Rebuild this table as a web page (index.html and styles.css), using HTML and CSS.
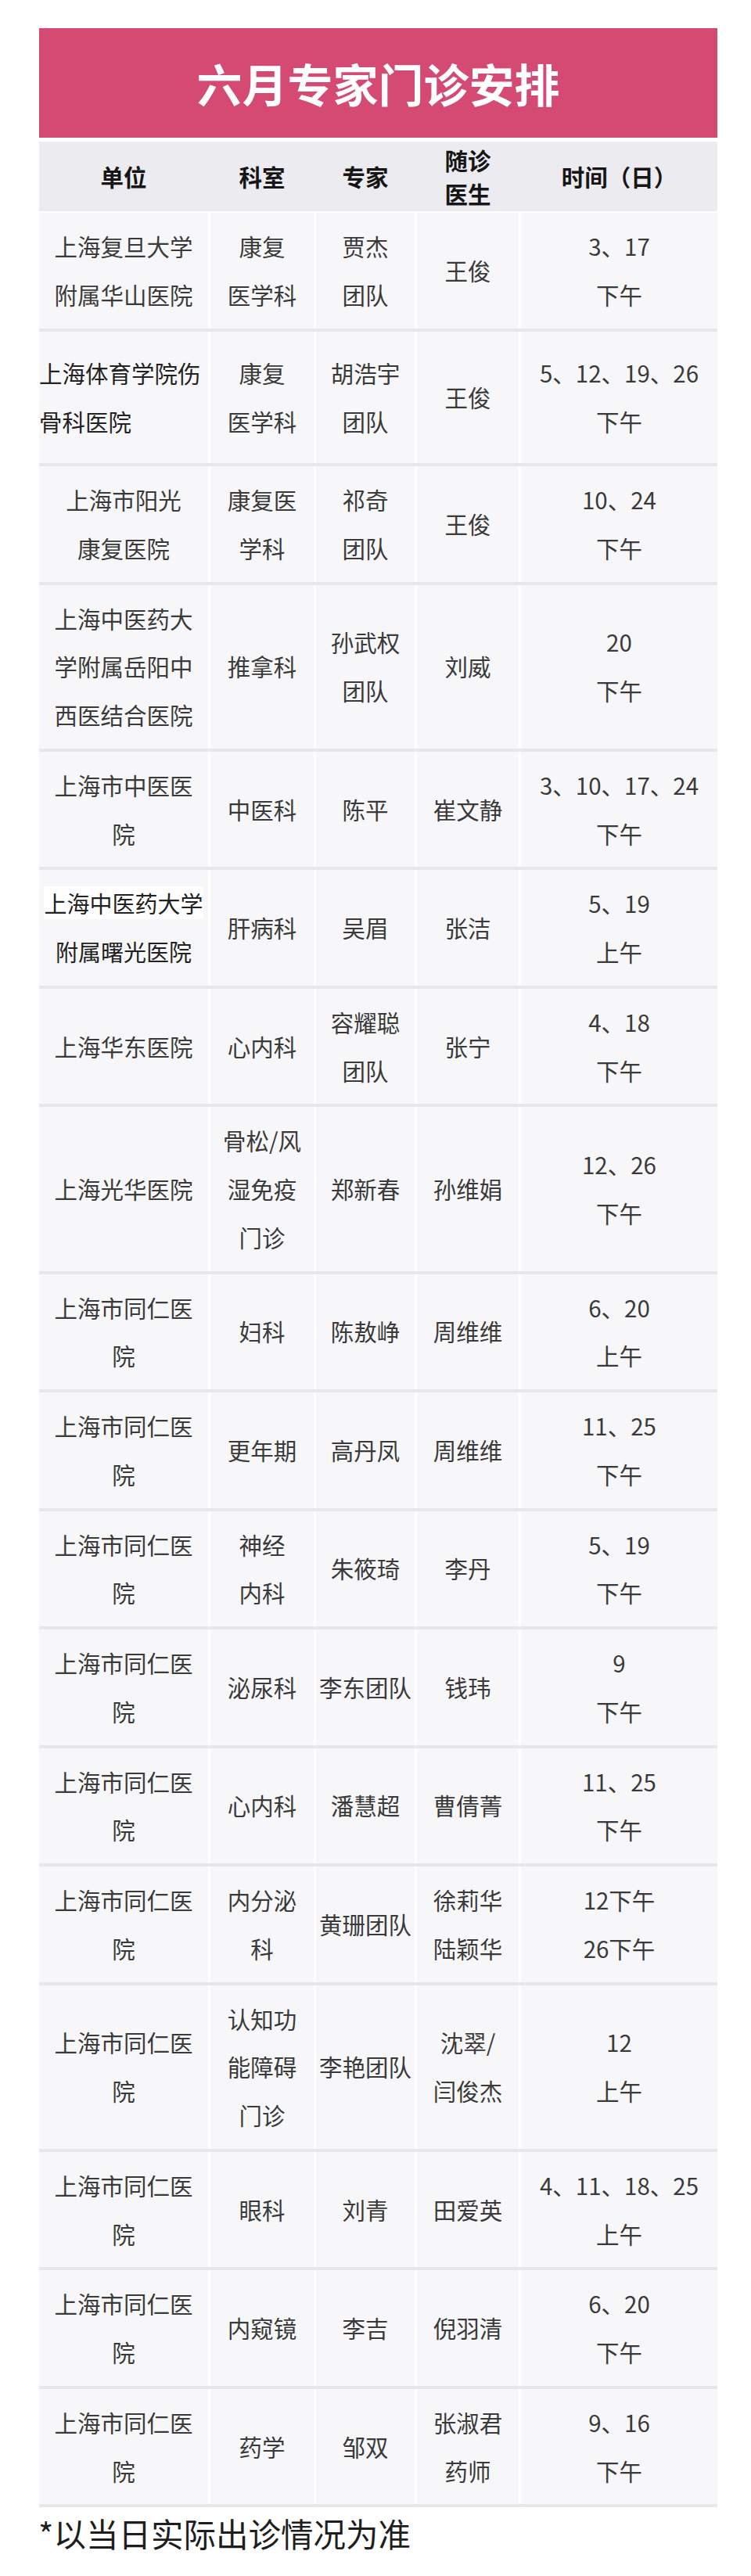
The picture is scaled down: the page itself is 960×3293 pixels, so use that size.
FILE: index.html
```html
<!DOCTYPE html>
<html lang="zh-CN">
<head>
<meta charset="utf-8">
<title>六月专家门诊安排</title>
<link rel="stylesheet" href="styles.css">
</head>
<body>
<div class="page">
  <div class="banner"><h1 class="title">六月专家门诊安排</h1></div>
  <div class="table">
    <div class="row head">
      <div class="cell">单位</div>
      <div class="cell">科室</div>
      <div class="cell">专家</div>
      <div class="cell">随诊<br>医生</div>
      <div class="cell">时间（日）</div>
    </div>
    <div class="row">
      <div class="cell">上海复旦大学<br>附属华山医院</div>
      <div class="cell">康复<br>医学科</div>
      <div class="cell">贾杰<br>团队</div>
      <div class="cell">王俊</div>
      <div class="cell">3、17<br>下午</div>
    </div>
    <div class="row tall">
      <div class="cell left dark">上海体育学院伤<br>骨科医院</div>
      <div class="cell">康复<br>医学科</div>
      <div class="cell">胡浩宇<br>团队</div>
      <div class="cell">王俊</div>
      <div class="cell">5、12、19、26<br>下午</div>
    </div>
    <div class="row">
      <div class="cell">上海市阳光<br>康复医院</div>
      <div class="cell">康复医<br>学科</div>
      <div class="cell">祁奇<br>团队</div>
      <div class="cell">王俊</div>
      <div class="cell">10、24<br>下午</div>
    </div>
    <div class="row">
      <div class="cell">上海中医药大<br>学附属岳阳中<br>西医结合医院</div>
      <div class="cell">推拿科</div>
      <div class="cell">孙武权<br>团队</div>
      <div class="cell">刘威</div>
      <div class="cell">20<br>下午</div>
    </div>
    <div class="row">
      <div class="cell">上海市中医医<br>院</div>
      <div class="cell">中医科</div>
      <div class="cell">陈平</div>
      <div class="cell">崔文静</div>
      <div class="cell">3、10、17、24<br>下午</div>
    </div>
    <div class="row">
      <div class="cell dark pasted"><div class="stack"><span class="hl">上海中医药大学</span><br>附属曙光医院</div></div>
      <div class="cell">肝病科</div>
      <div class="cell">吴眉</div>
      <div class="cell">张洁</div>
      <div class="cell">5、19<br>上午</div>
    </div>
    <div class="row">
      <div class="cell">上海华东医院</div>
      <div class="cell">心内科</div>
      <div class="cell">容耀聪<br>团队</div>
      <div class="cell">张宁</div>
      <div class="cell">4、18<br>下午</div>
    </div>
    <div class="row">
      <div class="cell">上海光华医院</div>
      <div class="cell">骨松/风<br>湿免疫<br>门诊</div>
      <div class="cell">郑新春</div>
      <div class="cell">孙维娟</div>
      <div class="cell">12、26<br>下午</div>
    </div>
    <div class="row">
      <div class="cell">上海市同仁医<br>院</div>
      <div class="cell">妇科</div>
      <div class="cell">陈敖峥</div>
      <div class="cell">周维维</div>
      <div class="cell">6、20<br>上午</div>
    </div>
    <div class="row">
      <div class="cell">上海市同仁医<br>院</div>
      <div class="cell">更年期</div>
      <div class="cell">高丹凤</div>
      <div class="cell">周维维</div>
      <div class="cell">11、25<br>下午</div>
    </div>
    <div class="row">
      <div class="cell">上海市同仁医<br>院</div>
      <div class="cell">神经<br>内科</div>
      <div class="cell">朱筱琦</div>
      <div class="cell">李丹</div>
      <div class="cell">5、19<br>下午</div>
    </div>
    <div class="row">
      <div class="cell">上海市同仁医<br>院</div>
      <div class="cell">泌尿科</div>
      <div class="cell">李东团队</div>
      <div class="cell">钱玮</div>
      <div class="cell">9<br>下午</div>
    </div>
    <div class="row">
      <div class="cell">上海市同仁医<br>院</div>
      <div class="cell">心内科</div>
      <div class="cell">潘慧超</div>
      <div class="cell">曹倩菁</div>
      <div class="cell">11、25<br>下午</div>
    </div>
    <div class="row">
      <div class="cell">上海市同仁医<br>院</div>
      <div class="cell">内分泌<br>科</div>
      <div class="cell">黄珊团队</div>
      <div class="cell">徐莉华<br>陆颖华</div>
      <div class="cell">12下午<br>26下午</div>
    </div>
    <div class="row">
      <div class="cell">上海市同仁医<br>院</div>
      <div class="cell">认知功<br>能障碍<br>门诊</div>
      <div class="cell">李艳团队</div>
      <div class="cell">沈翠/<br>闫俊杰</div>
      <div class="cell">12<br>上午</div>
    </div>
    <div class="row">
      <div class="cell">上海市同仁医<br>院</div>
      <div class="cell">眼科</div>
      <div class="cell">刘青</div>
      <div class="cell">田爱英</div>
      <div class="cell">4、11、18、25<br>上午</div>
    </div>
    <div class="row">
      <div class="cell">上海市同仁医<br>院</div>
      <div class="cell">内窥镜</div>
      <div class="cell">李吉</div>
      <div class="cell">倪羽清</div>
      <div class="cell">6、20<br>下午</div>
    </div>
    <div class="row">
      <div class="cell">上海市同仁医<br>院</div>
      <div class="cell">药学</div>
      <div class="cell">邹双</div>
      <div class="cell">张淑君<br>药师</div>
      <div class="cell">9、16<br>下午</div>
    </div>
  </div>
  <p class="note">*以当日实际出诊情况为准</p>
</div>
</body>
</html>
```

FILE: styles.css
```css
html, body {
  margin: 0;
  padding: 0;
  background: #ffffff;
}

body {
  font-family: "Noto Sans CJK SC", "Noto Sans", sans-serif;
  color: #3a3a3a;
}

.page {
  width: 867px;
  margin: 0 0 0 50px;
  padding-top: 36px;
}

.banner {
  height: 140px;
  background: #d44a72;
  display: flex;
  align-items: center;
  justify-content: center;
}

.title {
  margin: 0;
  font-size: 58px;
  font-weight: 700;
  color: #ffffff;
  line-height: 1;
  letter-spacing: 0;
}

.table {
  margin-top: 5px;
}

.row {
  display: grid;
  grid-template-columns: 216px 132px 126px 130px 251px;
  column-gap: 3px;
  background: #ffffff;
  border-bottom: 4px solid #e7e7eb;
}

.cell {
  background: #f7f7f9;
  padding: 12px 0;
  line-height: 61.75px;
  font-size: 29.5px;
  display: flex;
  align-items: center;
  justify-content: center;
  text-align: center;
  white-space: nowrap;
}

.row.head {
  background: #ebebf0;
  height: 89px;
  border-bottom: 0;
  margin-bottom: 2px;
}

.row.head .cell {
  background: transparent;
  padding: 0;
  line-height: 43px;
  font-weight: 700;
  color: #161616;
}

.row.tall .cell {
  padding: 22.5px 0;
}

.cell.left {
  justify-content: flex-start;
  text-align: left;
  padding-left: 4px;
}

.cell.dark {
  color: #222222;
}

.cell.pasted {
  font-size: 29px;
}

.stack {
  text-align: center;
}

.hl {
  background: #ffffff;
}

.note {
  margin: 9px 0 0 -1px;
  font-size: 41.5px;
  line-height: 49px;
  color: #1e1e1e;
}
```
